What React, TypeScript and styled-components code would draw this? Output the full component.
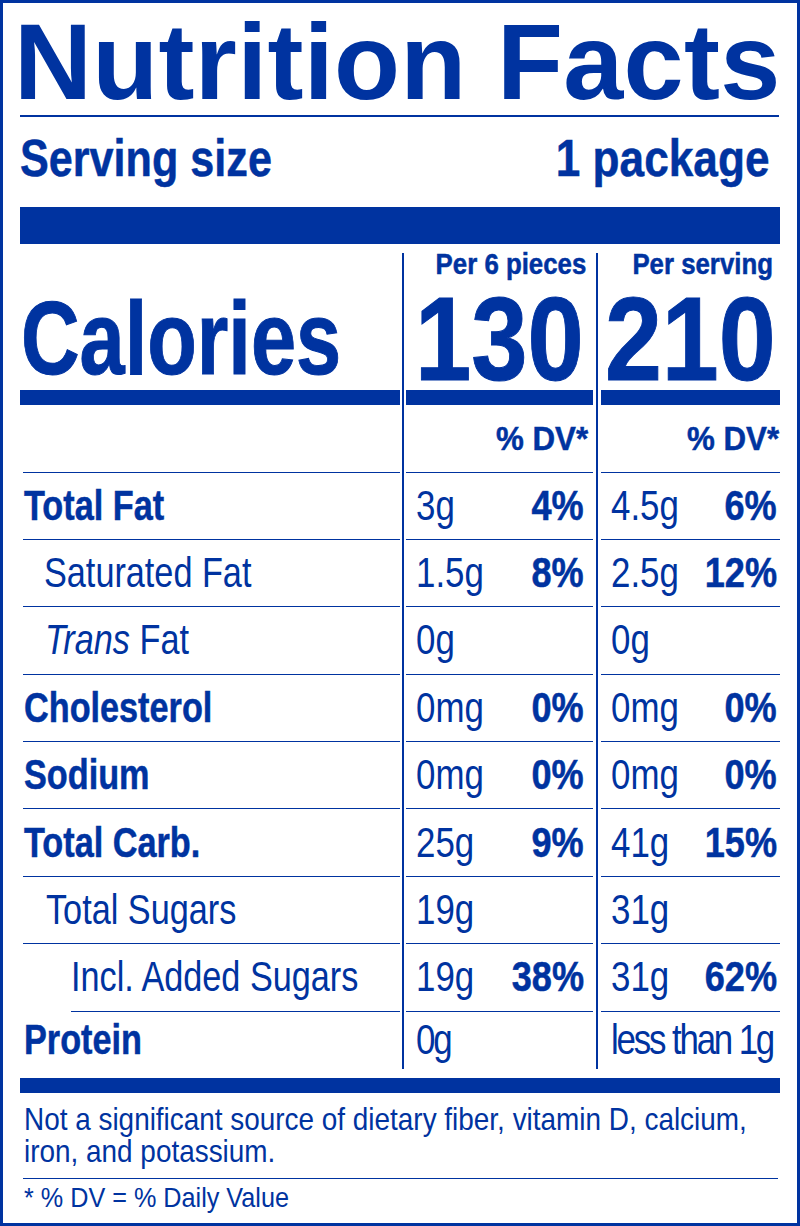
import React from 'react';
import styled, { createGlobalStyle } from 'styled-components';

const BLUE = '#0033a0';
const SANS = '"Liberation Sans", Arial, Helvetica, sans-serif';
const HEAVY = `-webkit-text-stroke: 0.5px ${BLUE};`;

type Nutrient = {
  name: React.ReactNode;
  bold?: boolean;
  indent?: number;
  lineStart?: number;
  perPieces: [string, string?];
  perServing: [string, string?];
  tight?: boolean;
};

const nutrients: Nutrient[] = [
  { name: 'Total Fat', bold: true, perPieces: ['3g', '4%'], perServing: ['4.5g', '6%'] },
  { name: 'Saturated Fat', indent: 21, perPieces: ['1.5g', '8%'], perServing: ['2.5g', '12%'] },
  {
    name: (
      <>
        <i>Trans</i> Fat
      </>
    ),
    indent: 22,
    perPieces: ['0g'],
    perServing: ['0g'],
  },
  { name: 'Cholesterol', bold: true, perPieces: ['0mg', '0%'], perServing: ['0mg', '0%'] },
  { name: 'Sodium', bold: true, perPieces: ['0mg', '0%'], perServing: ['0mg', '0%'] },
  { name: 'Total Carb.', bold: true, perPieces: ['25g', '9%'], perServing: ['41g', '15%'] },
  { name: 'Total Sugars', indent: 23, perPieces: ['19g'], perServing: ['31g'] },
  { name: 'Incl. Added Sugars', indent: 0, lineStart: 51, perPieces: ['19g', '38%'], perServing: ['31g', '62%'] },
  { name: 'Protein', bold: true, perPieces: ['0g'], perServing: ['less than 1g'], tight: true },
];

const App = () => {
  return (
    <>
      <GlobalStyle />
      <Label>
        <Title>Nutrition Facts</Title>
        <ThinRule />
        <ServingRow>
          <Condensed $x={0.83}>Serving size</Condensed>
          <Condensed $x={0.85} $origin="right">1 package</Condensed>
        </ServingRow>
        <HeavyBar $height={37} $top={23} />

        <Facts>
          <Divider $col={2} />
          <Divider $col={4} />

          <CaloriesCell>
            <Condensed $x={0.78}>Calories</Condensed>
          </CaloriesCell>
          <HeadCell $col={3}>
            <HeadLabel>
              <Condensed $x={0.89} $origin="right">Per 6 pieces</Condensed>
            </HeadLabel>
            <BigNumber $shift={0}>
              <Condensed $x={0.85} $origin="center">130</Condensed>
            </BigNumber>
          </HeadCell>
          <HeadCell $col={5}>
            <HeadLabel>
              <Condensed $x={0.89} $origin="right">Per serving</Condensed>
            </HeadLabel>
            <BigNumber $shift={0}>
              <Condensed $x={0.86} $origin="center">210</Condensed>
            </BigNumber>
          </HeadCell>

          <NameCell $lineStart={3} />
          <DvCell $col={3} $padRight={5}>
            <Condensed $x={0.92} $origin="right">% DV*</Condensed>
          </DvCell>
          <DvCell $col={5} $padRight={1}>
            <Condensed $x={0.92} $origin="right">% DV*</Condensed>
          </DvCell>

          {nutrients.map((n, i) => {
            const last = i === nutrients.length - 1;
            return (
              <React.Fragment key={i}>
                <NameCell $bold={n.bold} $indent={n.indent ?? 1} $lineStart={n.lineStart ?? 3} $last={last}>
                  <Condensed $x={0.815}>{n.name}</Condensed>
                </NameCell>
                <AmountCell $col={3} $padRight={9} $last={last}>
                  <Amount $tight={n.tight}>{n.perPieces[0]}</Amount>
                  {n.perPieces[1] && <Percent>{n.perPieces[1]}</Percent>}
                </AmountCell>
                <AmountCell $col={5} $padRight={3} $last={last}>
                  <Amount $tight={n.tight}>{n.perServing[0]}</Amount>
                  {n.perServing[1] && <Percent>{n.perServing[1]}</Percent>}
                </AmountCell>
              </React.Fragment>
            );
          })}
        </Facts>

        <HeavyBar $height={15} $top={9} />
        <Footnote>
          <Condensed $x={0.915}>
            Not a significant source of dietary fiber, vitamin D, calcium,
            <br />
            iron, and potassium.
          </Condensed>
        </Footnote>
        <ThinRule $left={3} $right={2} $top={11} />
        <Legend>
          <Condensed $x={0.9}>* % DV = % Daily Value</Condensed>
        </Legend>
      </Label>
    </>
  );
};

export default App;

const GlobalStyle = createGlobalStyle`
  html, body {
    margin: 0;
    padding: 0;
    background: #fff;
  }
  body {
    font-family: ${SANS};
    color: ${BLUE};
  }
`;

// no condensed face is installed, so narrow type is squeezed horizontally
const Condensed = styled.span<{ $x: number; $origin?: 'left' | 'right' | 'center' }>`
  display: inline-block;
  white-space: nowrap;
  transform: scaleX(${(p) => p.$x});
  transform-origin: ${(p) => p.$origin ?? 'left'} center;
`;

const Label = styled.div`
  box-sizing: border-box;
  width: 800px;
  height: 1226px;
  border: 3px solid ${BLUE};
  padding: 5px 17px 0;
  display: flex;
  flex-direction: column;
  overflow: hidden;
`;

const Title = styled.h1`
  margin: 0 0 0 -6px;
  font-weight: 700;
  font-size: 108px;
  line-height: 107px;
  letter-spacing: 0.3px;
  white-space: nowrap;
`;

const ThinRule = styled.div<{ $left?: number; $right?: number; $top?: number }>`
  height: 1.5px;
  background: ${BLUE};
  margin: ${(p) => p.$top ?? 0}px ${(p) => p.$right ?? 1}px 0 ${(p) => p.$left ?? 0}px;
`;

const ServingRow = styled.div`
  display: flex;
  justify-content: space-between;
  margin-top: 15.5px;
  padding-right: 11px;
  font-weight: 700;
  font-size: 52px;
  line-height: 52px;
  ${HEAVY}
`;

const HeavyBar = styled.div<{ $height: number; $top: number }>`
  height: ${(p) => p.$height}px;
  margin-top: ${(p) => p.$top}px;
  background: ${BLUE};
`;

const Facts = styled.div`
  display: grid;
  grid-template-columns: 380px 6px 187px 8px 179px;
  grid-template-rows: 152px 67.5px repeat(8, 67.4px) 57px;
  margin-top: 9px;
`;

const Divider = styled.div<{ $col: number }>`
  grid-column: ${(p) => p.$col};
  grid-row: 1 / -1;
  justify-self: center;
  width: 2px;
  background: ${BLUE};
`;

const CaloriesCell = styled.div`
  grid-column: 1;
  display: flex;
  align-items: flex-end;
  padding-left: 1px;
  border-bottom: 15px solid ${BLUE};
  font-weight: 700;
  font-size: 104px;
  line-height: 104px;
  -webkit-text-stroke: 1px ${BLUE};
`;

const HeadCell = styled.div<{ $col: number }>`
  grid-column: ${(p) => p.$col};
  min-width: 0;
  display: flex;
  flex-direction: column;
  justify-content: space-between;
  border-bottom: 15px solid ${BLUE};
  font-weight: 700;
  ${HEAVY}
`;

const HeadLabel = styled.div`
  display: flex;
  justify-content: flex-end;
  padding-right: 7px;
  font-size: 29px;
  line-height: 22px;
`;

const BigNumber = styled.div<{ $shift: number }>`
  display: flex;
  justify-content: center;
  margin-left: ${(p) => p.$shift}px;
  font-size: 119px;
  line-height: 102px;
  -webkit-text-stroke: 1px ${BLUE};
`;

const DvCell = styled.div<{ $col: number; $padRight: number }>`
  grid-column: ${(p) => p.$col};
  display: flex;
  align-items: center;
  justify-content: flex-end;
  padding-right: ${(p) => p.$padRight}px;
  border-bottom: 1.5px solid ${BLUE};
  font-weight: 700;
  font-size: 34px;
  line-height: 1;
  ${HEAVY}
`;

const NameCell = styled.div<{ $bold?: boolean; $indent?: number; $lineStart?: number; $last?: boolean }>`
  grid-column: 1;
  display: flex;
  align-items: center;
  margin-left: ${(p) => p.$lineStart ?? 0}px;
  padding-left: ${(p) => p.$indent ?? 0}px;
  border-bottom: ${(p) => (p.$last ? 'none' : `1.5px solid ${BLUE}`)};
  font-weight: ${(p) => (p.$bold ? 700 : 400)};
  font-size: 42px;
  line-height: 1;
  ${(p) => (p.$bold ? HEAVY : '')}
`;

const AmountCell = styled.div<{ $col: number; $padRight: number; $last?: boolean }>`
  grid-column: ${(p) => p.$col};
  min-width: 0;
  display: flex;
  align-items: center;
  justify-content: space-between;
  padding: 0 ${(p) => p.$padRight}px 0 10px;
  border-bottom: ${(p) => (p.$last ? 'none' : `1.5px solid ${BLUE}`)};
  font-size: 42px;
  line-height: 1;
`;

const Amount = styled.span<{ $tight?: boolean }>`
  display: inline-block;
  flex-shrink: 0;
  white-space: nowrap;
  font-weight: 400;
  letter-spacing: ${(p) => (p.$tight ? '-2.6px' : '0')};
  transform: scaleX(0.83);
  transform-origin: left center;
`;

const Percent = styled.span`
  display: inline-block;
  flex-shrink: 0;
  white-space: nowrap;
  font-weight: 700;
  transform: scaleX(0.86);
  transform-origin: right center;
  ${HEAVY}
`;

const Footnote = styled.p`
  margin: 10px 0 0;
  padding-left: 4px;
  font-size: 30.5px;
  line-height: 32px;
`;

const Legend = styled.p`
  margin: 4px 0 0;
  padding-left: 4px;
  font-size: 28px;
  line-height: 30px;
`;
